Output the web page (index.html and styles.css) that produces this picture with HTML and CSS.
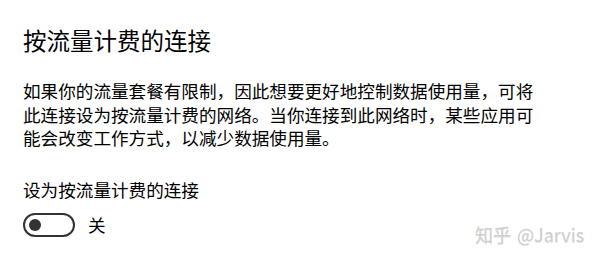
FILE: index.html
```html
<!DOCTYPE html>
<html lang="zh-CN">
<head>
<meta charset="utf-8">
<title>按流量计费的连接</title>
<link rel="stylesheet" href="styles.css">
</head>
<body>
<main class="page">
  <h1 class="title">按流量计费的连接</h1>
  <p class="desc">如果你的流量套餐有限制，因此想要更好地控制数据使用量，可将此连接设为按流量计费的网络。当你连接到此网络时，某些应用可能会改变工作方式，以减少数据使用量。</p>
  <div class="setting">
    <div class="label">设为按流量计费的连接</div>
    <div class="toggle-row">
      <span class="toggle"><span class="thumb"></span></span>
      <span class="state">关</span>
    </div>
  </div>
</main>
<div class="watermark">知乎 @Jarvis</div>
</body>
</html>
```

FILE: styles.css
```css
html, body {
  margin: 0;
  padding: 0;
  background: #ffffff;
}

body {
  width: 600px;
  height: 260px;
  overflow: hidden;
  position: relative;
  font-family: "Noto Sans CJK SC", "Noto Sans", sans-serif;
  color: #000000;
}

.page {
  padding: 25px 0 0 23px;
}

.title {
  margin: 0;
  font-size: 23.5px;
  line-height: 30px;
  font-weight: 400;
}

.desc {
  margin: 24px 0 0 0;
  width: 514px;
  font-size: 17.6px;
  line-height: 23.7px;
}

.setting {
  margin-top: 28px;
}

.label {
  font-size: 17.6px;
  line-height: 23.7px;
}

.toggle-row {
  display: flex;
  align-items: center;
  gap: 13px;
  margin-top: 11px;
  height: 24px;
}

.toggle {
  box-sizing: border-box;
  width: 52px;
  height: 24px;
  border: 2px solid #333333;
  border-radius: 12px;
  display: flex;
  align-items: center;
  padding-left: 4px;
}

.thumb {
  width: 12px;
  height: 12px;
  border-radius: 50%;
  background: #333333;
}

.state {
  font-size: 17.6px;
  line-height: 24px;
}

.watermark {
  position: absolute;
  left: 475px;
  top: 222px;
  font-size: 18px;
  line-height: 24px;
  word-spacing: 2px;
  color: #cfcfcf;
  text-shadow: 0 1px 0 #e6e6e6;
  white-space: nowrap;
}
```
